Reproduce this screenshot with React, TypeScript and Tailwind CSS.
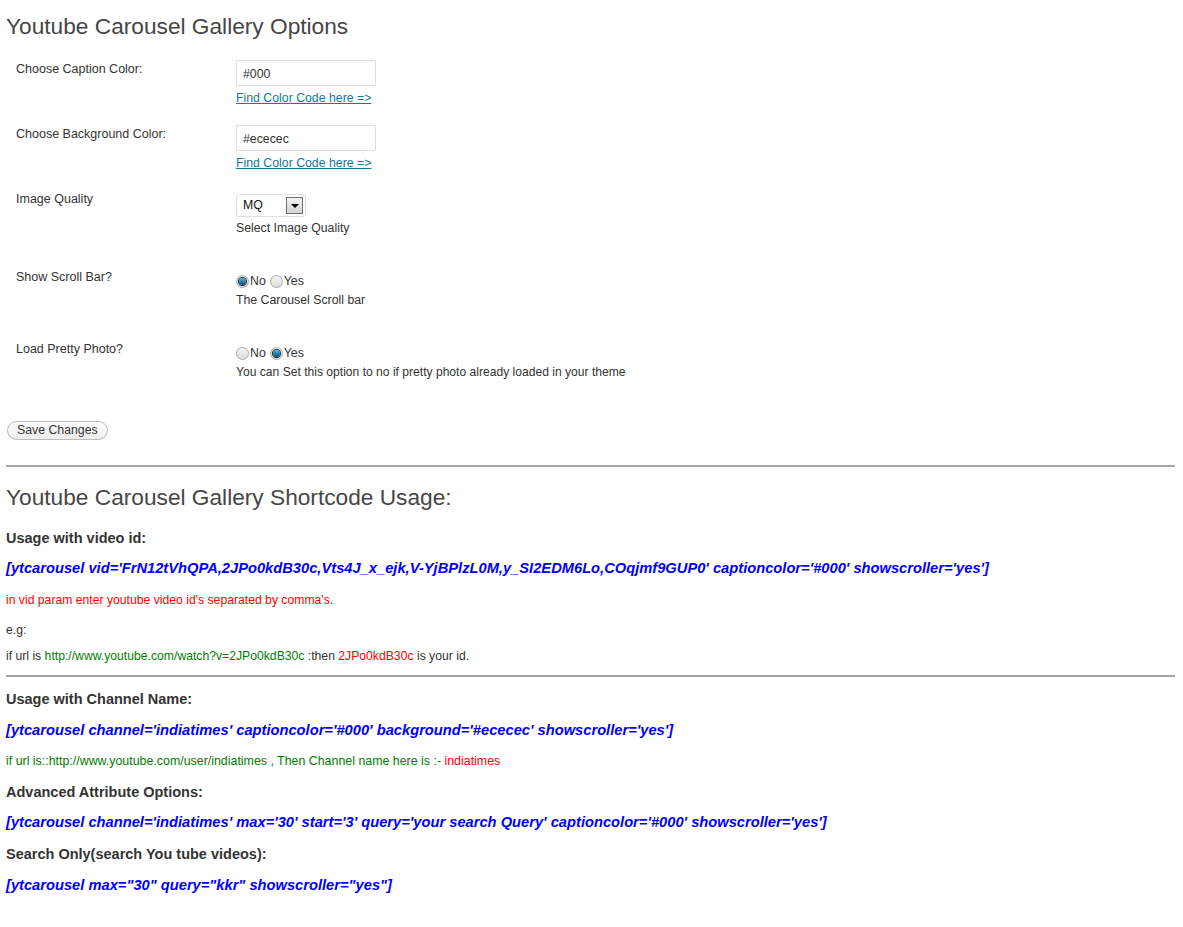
const Radio = ({ checked }: { checked?: boolean }) => (
  <span className="inline-flex items-center justify-center w-[13px] h-[13px] rounded-full border border-[#a9a9a9] bg-gradient-to-b from-[#f4f4f4] to-[#dcdcdc] mr-px">
    {checked && (
      <span className="w-[7px] h-[7px] rounded-full bg-gradient-to-b from-[#4fb6e6] to-[#0a4d7a] ring-1 ring-[#123]" />
    )}
  </span>
)

const FormRow = ({ label, height, labelPt, contentPt, children }: { label: string; height: string; labelPt: string; contentPt: string; children: React.ReactNode }) => (
  <div className={`flex ${height}`}>
    <div className={`w-[230px] pl-[10px] ${labelPt} text-[12.5px] leading-[18px] text-[#333]`}>{label}</div>
    <div className={`flex-1 ${contentPt}`}>{children}</div>
  </div>
)

const ColorLink = () => (
  <a href="#" className="block mt-[3px] text-[12.3px] leading-[18px] text-[#21759b] underline">Find Color Code here =&gt;</a>
)

const Code = ({ children, mt }: { children: React.ReactNode; mt: string }) => (
  <p className={`${mt} text-[14.7px] leading-[20px] font-bold italic text-[#0000ff]`}>{children}</p>
)

const Bold = ({ children, mt }: { children: React.ReactNode; mt: string }) => (
  <p className={`${mt} text-[14.5px] leading-[18px] font-bold text-[#333]`}>{children}</p>
)

export default function App() {
  return (
    <div className="min-h-[927px] bg-white pt-[12px] pl-[6px] pr-[8px] text-[#333]" style={{ fontFamily: '"Liberation Sans", Arial, sans-serif' }}>
      <h2 className="text-[22.7px] leading-[29px] text-[#464646]">Youtube Carousel Gallery Options</h2>

      <div className="mt-[11px]">
        <FormRow label="Choose Caption Color:" height="h-[65px]" labelPt="pt-[8px]" contentPt="pt-[8px]">
          <div className="w-[140px] h-[26px] border border-[#dfdfdf] px-[6px] text-[12.3px] leading-[26px] text-[#333]">#000</div>
          <ColorLink />
        </FormRow>
        <FormRow label="Choose Background Color:" height="h-[65px]" labelPt="pt-[8px]" contentPt="pt-[8px]">
          <div className="w-[140px] h-[26px] border border-[#dfdfdf] px-[6px] text-[12.3px] leading-[26px] text-[#333]">#ececec</div>
          <ColorLink />
        </FormRow>
        <FormRow label="Image Quality" height="h-[78px]" labelPt="pt-[8px]" contentPt="pt-[12px]">
          <div className="flex items-center justify-between w-[70px] h-[23px] border border-[#dfdfdf] rounded-[3px] pl-[6px] pr-[2px] text-[12.3px] text-[#111]">
            <span>MQ</span>
            <span className="flex items-center justify-center w-[17px] h-[17px] border border-[#707070] bg-gradient-to-b from-[#f2f2f2] to-[#d4d4d4]">
              <span className="w-0 h-0 border-l-[4px] border-r-[4px] border-t-[4px] border-l-transparent border-r-transparent border-t-black" />
            </span>
          </div>
          <p className="mt-[2px] text-[12.3px] leading-[18px]">Select Image Quality</p>
        </FormRow>
        <FormRow label="Show Scroll Bar?" height="h-[72px]" labelPt="pt-[8px]" contentPt="pt-[11px]">
          <div className="flex items-center h-[20px] text-[12.3px]">
            <Radio checked />
            <span className="mr-[4px]">No</span>
            <Radio />
            <span>Yes</span>
          </div>
          <p className="text-[12.3px] leading-[18px]">The Carousel Scroll bar</p>
        </FormRow>
        <FormRow label="Load Pretty Photo?" height="h-[85px]" labelPt="pt-[8px]" contentPt="pt-[11px]">
          <div className="flex items-center h-[20px] text-[12.3px]">
            <Radio />
            <span className="mr-[4px]">No</span>
            <Radio checked />
            <span>Yes</span>
          </div>
          <p className="text-[12.1px] leading-[18px]">You can Set this option to no if pretty photo already loaded in your theme</p>
        </FormRow>
      </div>

      <button className="ml-px h-[19px] px-[9px] rounded-full border border-[#bbb] bg-gradient-to-b from-white to-[#ededed] text-[12.3px] leading-[17px] text-[#333]">Save Changes</button>

      <hr className="mt-[24px] border-0 h-[2px] bg-[#a5a5a5] w-[1169px]" />

      <h2 className="mt-[16px] text-[22.7px] leading-[29px] text-[#464646]">Youtube Carousel Gallery Shortcode Usage:</h2>

      <Bold mt="mt-[17px]">Usage with video id:</Bold>
      <Code mt="mt-[11px]">[ytcarousel vid='FrN12tVhQPA,2JPo0kdB30c,Vts4J_x_ejk,V-YjBPlzL0M,y_SI2EDM6Lo,COqjmf9GUP0' captioncolor='#000' showscroller='yes']</Code>
      <p className="mt-[13px] text-[12.2px] leading-[18px] text-[#ff0000]">in vid param enter youtube video id's separated by comma's.</p>
      <p className="mt-[12px] text-[12.2px] leading-[18px]">e.g:</p>
      <p className="mt-[8px] text-[12.2px] leading-[18px]">
        if url is <span className="text-[#008000]">http://www.youtube.com/watch?v=2JPo0kdB30c</span> :then <span className="text-[#ff0000]">2JPo0kdB30c</span> is your id.
      </p>

      <hr className="mt-[10px] border-0 h-[2px] bg-[#a5a5a5] w-[1169px]" />

      <Bold mt="mt-[13px]">Usage with Channel Name:</Bold>
      <Code mt="mt-[12px]">[ytcarousel channel='indiatimes' captioncolor='#000' background='#ececec' showscroller='yes']</Code>
      <p className="mt-[12px] text-[12.4px] leading-[18px] text-[#008000]">
        if url is::http://www.youtube.com/user/indiatimes , Then Channel name here is :- <span className="text-[#ff0000]">indiatimes</span>
      </p>
      <Bold mt="mt-[13px]">Advanced Attribute Options:</Bold>
      <Code mt="mt-[11px]">[ytcarousel channel='indiatimes' max='30' start='3' query='your search Query' captioncolor='#000' showscroller='yes']</Code>
      <Bold mt="mt-[13px]">Search Only(search You tube videos):</Bold>
      <Code mt="mt-[12px]">[ytcarousel max="30" query="kkr" showscroller="yes"]</Code>
    </div>
  )
}
